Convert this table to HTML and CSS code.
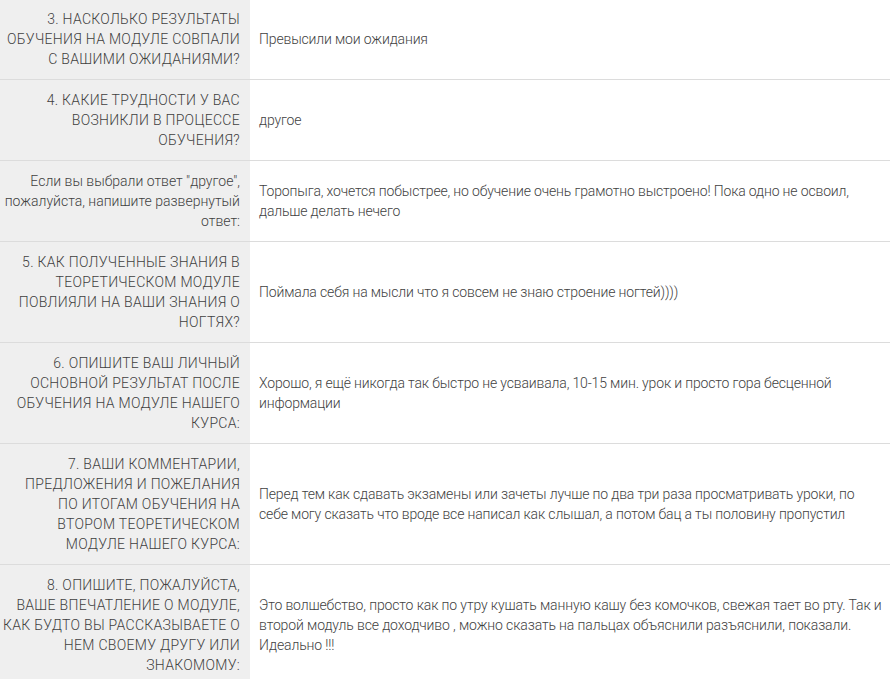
FILE: index.html
```html
<!DOCTYPE html>
<html lang="ru">
<head>
<meta charset="utf-8">
<link rel="stylesheet" href="styles.css">
</head>
<body>
<div class="survey">
  <div class="row">
    <div class="q">3. НАСКОЛЬКО РЕЗУЛЬТАТЫ<br>ОБУЧЕНИЯ НА МОДУЛЕ СОВПАЛИ<br>С ВАШИМИ ОЖИДАНИЯМИ?</div>
    <div class="a">Превысили мои ожидания</div>
  </div>
  <div class="row">
    <div class="q">4. КАКИЕ ТРУДНОСТИ У ВАС<br>ВОЗНИКЛИ В ПРОЦЕССЕ<br>ОБУЧЕНИЯ?</div>
    <div class="a">другое</div>
  </div>
  <div class="row">
    <div class="q lower">Если вы выбрали ответ "другое",<br>пожалуйста, напишите развернутый<br>ответ:</div>
    <div class="a">Торопыга, хочется побыстрее, но обучение очень грамотно выстроено! Пока одно не освоил,<br>дальше делать нечего</div>
  </div>
  <div class="row">
    <div class="q">5. КАК ПОЛУЧЕННЫЕ ЗНАНИЯ В<br>ТЕОРЕТИЧЕСКОМ МОДУЛЕ<br>ПОВЛИЯЛИ НА ВАШИ ЗНАНИЯ О<br>НОГТЯХ?</div>
    <div class="a">Поймала себя на мысли что я совсем не знаю строение ногтей))))</div>
  </div>
  <div class="row">
    <div class="q">6. ОПИШИТЕ ВАШ ЛИЧНЫЙ<br>ОСНОВНОЙ РЕЗУЛЬТАТ ПОСЛЕ<br>ОБУЧЕНИЯ НА МОДУЛЕ НАШЕГО<br>КУРСА:</div>
    <div class="a">Хорошо, я ещё никогда так быстро не усваивала, 10-15 мин. урок и просто гора бесценной<br>информации</div>
  </div>
  <div class="row">
    <div class="q">7. ВАШИ КОММЕНТАРИИ,<br>ПРЕДЛОЖЕНИЯ И ПОЖЕЛАНИЯ<br>ПО ИТОГАМ ОБУЧЕНИЯ НА<br>ВТОРОМ ТЕОРЕТИЧЕСКОМ<br>МОДУЛЕ НАШЕГО КУРСА:</div>
    <div class="a">Перед тем как сдавать экзамены или зачеты лучше по два три раза просматривать уроки, по<br>себе могу сказать что вроде все написал как слышал, а потом бац а ты половину пропустил</div>
  </div>
  <div class="row">
    <div class="q">8. ОПИШИТЕ, ПОЖАЛУЙСТА,<br>ВАШЕ ВПЕЧАТЛЕНИЕ О МОДУЛЕ,<br>КАК БУДТО ВЫ РАССКАЗЫВАЕТЕ О<br>НЕМ СВОЕМУ ДРУГУ ИЛИ<br>ЗНАКОМОМУ:</div>
    <div class="a narrow">Это волшебство, просто как по утру кушать манную кашу без комочков, свежая тает во рту. Так и<br>второй модуль все доходчиво , можно сказать на пальцах объяснили разъяснили, показали.<br>Идеально !!!</div>
  </div>
</div>
</body>
</html>
```
FILE: styles.css
```css
html, body {
  margin: 0;
  padding: 0;
  background: #ffffff;
}
body {
  font-family: Roboto, "Liberation Sans", sans-serif;
  font-size: 14px;
  font-weight: 300;
  line-height: 20px;
  color: #3f3f3f;
}
.survey {
  margin-top: -1px;
  width: 890px;
}
.row {
  display: grid;
  grid-template-columns: 250px 1fr;
  border-bottom: 1px solid #dcdcdc;
}
.q {
  background: #efefef;
  text-align: right;
  padding: 10px 10px 10px 4px;
  white-space: nowrap;
  display: flex;
  align-items: center;
  justify-content: flex-end;
  letter-spacing: 0.3px;
}
.q.lower {
  letter-spacing: 0;
}
.a {
  padding: 10px 10px 10px 9px;
  display: flex;
  align-items: center;
  white-space: nowrap;
  letter-spacing: -0.15px;
}
.a.narrow {
  letter-spacing: -0.12px;
}
```
